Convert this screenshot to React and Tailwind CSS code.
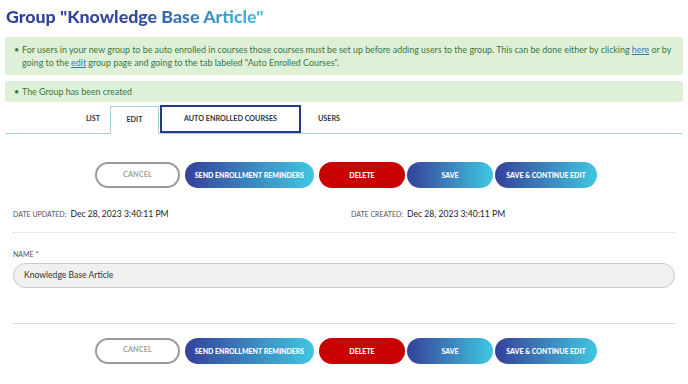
import React from 'react';

const font = { fontFamily: 'Lato, "Noto Sans", sans-serif' };

const ActionButtons = () => (
  <div className="flex justify-center gap-[5px] pl-[4px]">
    <button className="h-[26px] w-[85px] rounded-full border-2 border-[#9a9a9a] bg-white text-[7.2px] font-bold tracking-wide text-[#a0a0a0]">
      CANCEL
    </button>
    <button className="h-[26px] w-[129px] rounded-full bg-gradient-to-r from-[#34409a] to-[#3ec8e0] text-[7px] font-black text-white">
      SEND ENROLLMENT REMINDERS
    </button>
    <button className="h-[26px] w-[86px] rounded-full bg-[#c80000] text-[7px] font-black text-white">
      DELETE
    </button>
    <button className="-ml-[3px] h-[26px] w-[86px] rounded-full bg-gradient-to-r from-[#34409a] to-[#3ec8e0] text-[7px] font-black text-white">
      SAVE
    </button>
    <button className="-ml-[3px] h-[26px] w-[102px] rounded-full bg-gradient-to-r from-[#34409a] to-[#3ec8e0] text-[7px] font-black text-white">
      SAVE &amp; CONTINUE EDIT
    </button>
  </div>
);

const App = () => {
  return (
    <div className="min-h-[384px] w-[688px] bg-white" style={font}>
      <h1 className="px-[6px] pt-[5px] text-[17.8px] font-black leading-[22px]">
        <span className="bg-gradient-to-r from-[#2f4096] via-[#33479e] to-[#40c4de] bg-clip-text text-transparent">
          Group &quot;Knowledge Base Article&quot;
        </span>
      </h1>

      <div className="mx-[5px] mt-[10px] rounded-[3px] bg-[#dff0d8] py-[6px] pl-[9px] pr-[10px] text-[8.9px] leading-[13px] text-[#3c763d]">
        <div className="flex">
          <span className="w-[8px] shrink-0">•</span>
          <p>
            For users in your new group to be auto enrolled in courses those courses must be set up before adding users to the group. This can be done either by clicking <a className="text-[#337ab7] underline">here</a> or by going to the <a className="text-[#337ab7] underline">edit</a> group page and going to the tab labeled &quot;Auto Enrolled Courses&quot;.
          </p>
        </div>
      </div>

      <div className="mx-[5px] mt-[6px] flex h-[21px] items-center rounded-[3px] bg-[#dff0d8] pl-[9px] text-[8.9px] text-[#3c763d]">
        <span className="w-[8px] shrink-0">•</span>
        <span>The Group has been created</span>
      </div>

      <div className="mx-[6px] mt-[4px] flex h-[28px] items-end border-b border-[#a8cfe0] text-[7.2px] font-bold text-[#333]">
        <div className="flex h-[27px] w-[104px] items-center justify-end pr-[10px]">LIST</div>
        <div className="-mb-px flex h-[28px] w-[49px] items-center justify-center border border-b-white border-[#a8cfe0] bg-white">
          EDIT
        </div>
        <div className="ml-[1px] flex h-[28px] w-[141px] items-center justify-center border-[2.5px] border-[#27378a] pt-[1px]">
          AUTO ENROLLED COURSES
        </div>
        <div className="flex h-[27px] w-[56px] items-center justify-center">USERS</div>
      </div>

      <div className="mt-[28px]">
        <ActionButtons />
      </div>

      <div className="mt-[20px] flex items-center px-[13px]">
        <div className="flex w-[338px] items-baseline">
          <span className="text-[7px] text-[#555]">DATE UPDATED:</span>
          <span className="ml-[4px] text-[8.6px] text-[#222]">Dec 28, 2023 3:40:11 PM</span>
        </div>
        <div className="flex items-baseline">
          <span className="text-[7px] text-[#555]">DATE CREATED:</span>
          <span className="ml-[4px] text-[8.6px] text-[#222]">Dec 28, 2023 3:40:11 PM</span>
        </div>
      </div>

      <div className="mx-[13px] mt-[11px] border-t border-dotted border-[#d4d4d4]" />

      <div className="px-[13px] pt-[17px]">
        <label className="block text-[7px] leading-[8px] text-[#555]">NAME *</label>
        <div className="mt-[5px] flex h-[25px] items-center rounded-full border border-[#c8c8c8] bg-[#f0f0f0] px-[10px] text-[8.6px] text-[#333]">
          Knowledge Base Article
        </div>
      </div>

      <div className="mx-[13px] mt-[35px] border-t border-[#dcdcdc]" />

      <div className="mt-[14px] pb-[20px]">
        <ActionButtons />
      </div>
    </div>
  );
};

export default App;
